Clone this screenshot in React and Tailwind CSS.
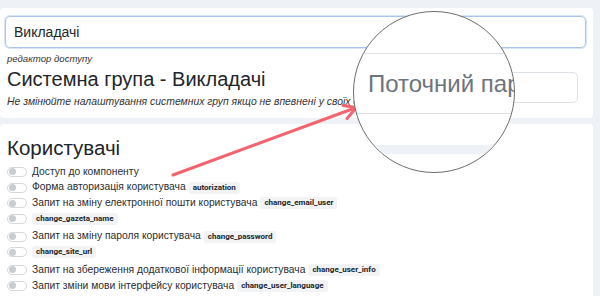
import React from "react";

const F = { fontFamily: '"Liberation Sans", Arial, sans-serif' };
const R = { fontFamily: 'Roboto, "Liberation Sans", sans-serif' };

function Toggle() {
  return (
    <span className="inline-flex items-center w-[20px] h-[10px] rounded-full border border-[#d4d8dd] bg-white px-[1px] shrink-0">
      <span className="w-[7px] h-[7px] rounded-full bg-[#c9cdd2]" />
    </span>
  );
}

function Badge({ children, first }) {
  return (
    <span style={R} className={"inline-flex items-center h-[12px] px-[4px] rounded-[3px] bg-[#f1f3f5] text-[8px] font-bold text-[#212529] leading-none " + (first ? "ml-[5px]" : "ml-[3px]")}>
      {children}
    </span>
  );
}

function Row({ label, code, extra }) {
  return (
    <div className={"flex items-center h-[15.7px] " + (extra ? "mb-[2px]" : "")}>
      <Toggle />
      {label && <span className="ml-[5px] text-[10.3px] text-[#2a2d31] leading-none">{label}</span>}
      {code && <Badge first={!label}>{code}</Badge>}
    </div>
  );
}

export default function App() {
  return (
    <div className="relative w-[600px] h-[296px] overflow-hidden bg-[#eef1f5] pt-[8px]" style={F}>
      <div className="mr-[7px] bg-white rounded-[4px] px-[7px] pt-[8px] h-[110px]">
        <div className="ml-[-2px] h-[32px] rounded-[5px] border border-[#a9c5ee] shadow-[0_0_0_1px_#d7e5f8] flex items-center px-[8px] text-[14px] text-[#212529]">
          Викладачі
        </div>
        <div className="flex justify-between">
          <div>
            <div className="mt-[5px] text-[9.6px] italic text-[#333] leading-[12px]">редактор доступу</div>
            <div className="mt-[2px] text-[20px] text-[#212529] leading-[24px]">Системна група - Викладачі</div>
            <div className="mt-[4px] text-[10.4px] italic text-[#333] leading-[13px]">
              Не змінюйте налаштування системних груп якщо не впевнені у своїх діях
            </div>
          </div>
          <div className="mt-[24px] mr-[8px] w-[150px] h-[31px] rounded-[5px] border border-[#dee2e6]" />
        </div>
      </div>

      <div className="mt-[6px] mr-[7px] bg-white rounded-t-[4px] px-[7px] pt-[12px] h-[200px]">
        <div className="text-[20.5px] text-[#212529] leading-[24px] mb-[4px]">Користувачі</div>
        <Row label="Доступ до компоненту" />
        <Row label="Форма авторизація користувача" code="autorization" />
        <Row label="Запит на зміну електронної пошти користувача" code="change_email_user" />
        <Row code="change_gazeta_name" extra />
        <Row label="Запит на зміну пароля користувача" code="change_password" />
        <Row code="change_site_url" extra />
        <Row label="Запит на збереження додаткової інформації користувача" code="change_user_info" />
        <Row label="Запит зміни мови інтерфейсу користувача" code="change_user_language" />
      </div>

      <svg className="absolute left-0 top-0" width="600" height="296" viewBox="0 0 600 296">
        <line x1="173" y1="175" x2="355" y2="108" stroke="#f2646f" strokeWidth="3" strokeLinecap="round" />
        <polyline points="343,105.5 356.5,107.5 347,118.5" fill="none" stroke="#f2646f" strokeWidth="3" strokeLinecap="round" strokeLinejoin="round" />
      </svg>

      <div className="absolute left-[353px] top-[11px] w-[162px] h-[162px] rounded-full border-[1.5px] border-[#6e6e6e] bg-white overflow-hidden">
        <div className="absolute left-[-30px] top-[41px] w-[400px] h-[61px] rounded-[8px] border-[1.5px] border-[#dfe2e7] flex items-center pl-[43px] text-[24px] text-[#6c757d] whitespace-nowrap">
          Поточний пароль
        </div>
        <div className="absolute left-0 top-[133px] w-full h-[9px] bg-[#eef1f5]" />
      </div>
    </div>
  );
}
